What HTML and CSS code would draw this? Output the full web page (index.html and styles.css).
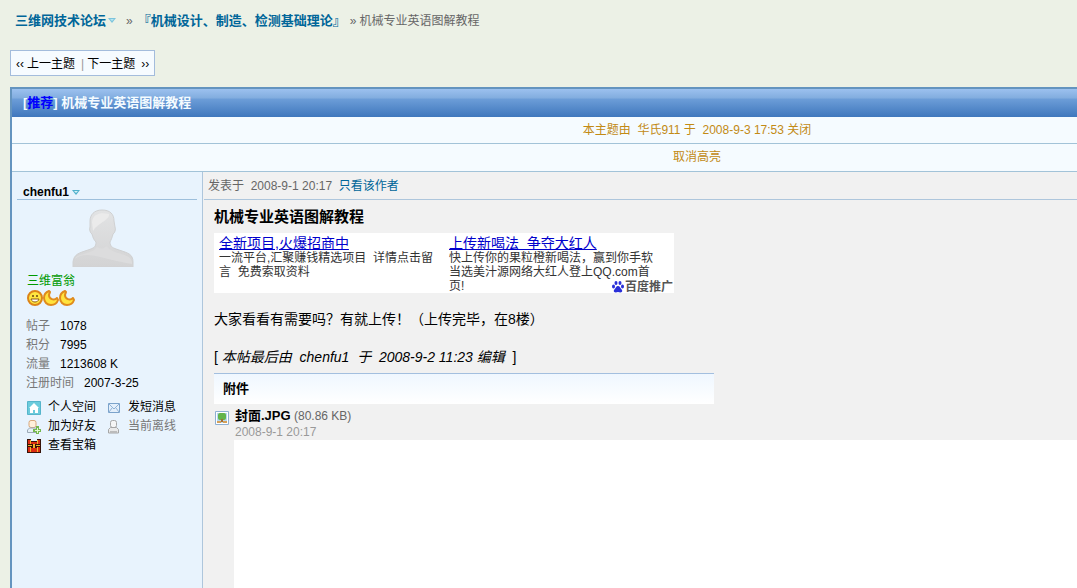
FILE: index.html
```
<!DOCTYPE html>
<html lang="zh-CN">
<head>
    <meta charset="UTF-8">
    <meta name="viewport" content="width=device-width, initial-scale=1.0">
    <title>机械专业英语图解教程 - 三维网技术论坛</title>
    <link rel="stylesheet" href="styles.css">
</head>
<body>
    <nav class="crumbs">
        <a href="#">三维网技术论坛</a>
        <svg class="arrow" width="8" height="5" viewBox="0 0 8 5"><path d="M0 0h8L4 5z" fill="#7cc4dc"/><path d="M2 1h4L4 3z" fill="#b5e6f2"/></svg>
        <span class="sep first">»</span>
        <a class="forum" href="#">『机械设计、制造、检测基础理论』</a>
        <span class="sep">»</span>
        <span>机械专业英语图解教程</span>
    </nav>

    <div class="pager">
        <span>‹‹</span>
        <a href="#">上一主题</a>
        <span class="bar">|</span>
        <a href="#">下一主题</a>
        <span class="next">››</span>
    </div>

    <main class="thread">
        <h1>[<a href="#">推荐</a>] 机械专业英语图解教程</h1>
        <div class="notice">本主题由 &nbsp;华氏911 于 &nbsp;2008-9-3 17:53 关闭</div>
        <div class="notice">取消高亮</div>

        <div class="post">
            <aside class="author">
                <div class="name">
                    <a href="#">chenfu1</a>
                    <svg class="arrow" width="8" height="5" viewBox="0 0 8 5"><path d="M0 0h8L4 5z" fill="#4fb0cb"/><path d="M2 1h4L4 3z" fill="#d5f2f8"/></svg>
                </div>
                <svg class="avatar" width="62" height="58" viewBox="0 0 62 58">
                    <defs>
                        <linearGradient id="skin" x1="0" y1="0" x2="0" y2="1">
                            <stop offset="0" stop-color="#e2e3e4"/>
                            <stop offset="1" stop-color="#d3d3d4"/>
                        </linearGradient>
                    </defs>
                    <path d="M30 1c8 0 12 4 12 11l1 6c1 2 0 6-2 7-1 4-2 6-3 8 0 5 3 6 9 8 9 3 14 4 14 12v5H1v-5c1-8 6-9 15-12 6-2 8-3 8-8-2-2-3-4-4-8-2-1-3-5-2-7V12C18 6 22 1 30 1z" fill="url(#skin)" stroke="#d0d1d2"/>
                    <path d="M20 13c1-8 8-10 17-8 1 5-8 8-14 14l-2 3z" fill="#ebebeb"/>
                    <path d="M3 50c10-9 24-1 57 5v-2c-1-5-6-7-14-9-6-2-10-4-11-7-3 3-7 3-10 1-2 4-8 5-13 7-5 1-8 2-9 5z" fill="#dcdcdd"/>
                </svg>
                <div class="rank">三维富翁</div>
                <div class="stars">
                    <svg width="16" height="16" viewBox="0 0 16 16"><circle cx="8" cy="8" r="7" fill="#ffe640" stroke="#dc8418" stroke-width="2"/><circle cx="6" cy="6" r="1" fill="#6b4510"/><circle cx="10" cy="6" r="1" fill="#6b4510"/><path d="M4 9h8c-1 4-7 4-8 0z" fill="#fff" stroke="#8f5b10"/></svg>
                    <svg width="16" height="16" viewBox="0 0 16 16"><path d="M6 1C3 2 1 5 1 8c0 4 3 7 7 7 3 0 6-2 7-5l-1-2c-3 3-8 1-8-3 0-1 1-2 1-3z" fill="#ffe33d" stroke="#e08b1c" stroke-width="2" stroke-linejoin="round"/></svg>
                    <svg width="16" height="16" viewBox="0 0 16 16"><path d="M6 1C3 2 1 5 1 8c0 4 3 7 7 7 3 0 6-2 7-5l-1-2c-3 3-8 1-8-3 0-1 1-2 1-3z" fill="#ffe33d" stroke="#e08b1c" stroke-width="2" stroke-linejoin="round"/></svg>
                </div>
                <dl class="stats">
                    <div><dt>帖子</dt><dd>1078</dd></div>
                    <div><dt>积分</dt><dd>7995</dd></div>
                    <div><dt>流量</dt><dd>1213608 K</dd></div>
                    <div><dt>注册时间</dt><dd>2007-3-25</dd></div>
                </dl>
                <ul class="actions">
                    <li>
                        <svg width="14" height="14" viewBox="0 0 14 14"><path d="M.5.5h13v13H.5z" fill="#6bcbdc" stroke="#56b5cb"/><path d="M7 2l5 5h-1v5H8V9H6v3H3V7H2z" fill="#fff"/></svg>
                        <a href="#">个人空间</a>
                    </li>
                    <li>
                        <svg width="14" height="14" viewBox="0 0 14 14"><path d="M1.500 2.500h11v9h-11z" fill="#e3effb" stroke="#7ba3cb"/><path d="M2 3l5 5 5-5M2 11l3-4M12 11L9 7" fill="none" stroke="#8fb2d6"/></svg>
                        <a href="#">发短消息</a>
                    </li>
                    <li>
                        <svg width="14" height="14" viewBox="0 0 14 14"><rect x="2" y=".5" width="7" height="7" rx="2" fill="#fff0da" stroke="#d9a77b"/><path d="M.5 12.500V10l2-2h6l2 2v2.500z" fill="#e4eef6" stroke="#9caab7"/><path d="M9 6h3v3h2v3h-2v2H9v-2H6V9h3z" fill="#75b84e"/><path d="M10 8h1v2h2v1h-2v2h-1v-2H8v-1h2z" fill="#e5f8d7"/></svg>
                        <a href="#">加为好友</a>
                    </li>
                    <li class="offline">
                        <svg width="14" height="14" viewBox="0 0 14 14"><rect x="3.500" y=".5" width="6" height="7" rx="2" fill="#f5f5f5" stroke="#a6a6a6"/><path d="M1.500 13V9.500l2-2h6l2 2V13z" fill="#e9e9e9" stroke="#a6a6a6"/><path d="M3 11h7v2H3z" fill="#bbb"/></svg>
                        <span>当前离线</span>
                    </li>
                    <li>
                        <svg width="14" height="14" viewBox="0 0 14 14"><path d="M0 0h4v2h6V0h4v14H0z" fill="#351208"/><path d="M1 1h3v4H1zM10 1h3v4h-3zM4 3h6v2H4zM1 8h3v5H1zM10 8h3v5h-3zM4 9h6v4H4z" fill="#dc2c12"/><path d="M3 1h1v4H3zM10 1h1v4h-1zM1 6h4v1H1zM9 6h4v1H9zM6 5h2v4H6zM3 8h1v5H3zM10 8h1v5h-1z" fill="#f0b42c"/></svg>
                        <a href="#">查看宝箱</a>
                    </li>
                </ul>
            </aside>

            <article class="content">
                <div class="info">发表于 &nbsp;2008-9-1 20:17 &nbsp;<a href="#">只看该作者</a></div>
                <div class="message">
                    <h2>机械专业英语图解教程</h2>
                    <div class="ads">
                        <div class="ad">
                            <a href="#">全新项目,火爆招商中</a>
                            <p>一流平台,汇聚赚钱精选项目 &nbsp;详情点击留言 &nbsp;免费索取资料</p>
                        </div>
                        <div class="ad">
                            <a href="#">上传新喝法 &nbsp;争夺大红人</a>
                            <p>快上传你的果粒橙新喝法，赢到你手软当选美汁源网络大红人登上QQ.com首页!</p>
                        </div>
                        <a class="baidu" href="#">
                            <svg width="12" height="12" viewBox="0 0 12 12" fill="#2a2fd8"><ellipse cx="1.500" cy="5.500" rx="1.500" ry="2"/><ellipse cx="4" cy="2" rx="1.500" ry="2"/><ellipse cx="8" cy="2" rx="1.500" ry="2"/><ellipse cx="10.500" cy="5.500" rx="1.500" ry="2"/><path d="M6 5c2 0 2 2 4 4 1 2-1 3-4 2-3 1-5 0-4-2 2-2 2-4 4-4z"/></svg>
                            <span>百度推广</span>
                        </a>
                    </div>
                    <p class="text">大家看看有需要吗？有就上传！（上传完毕，在8楼）</p>
                    <p class="text edited">[ <i>本帖最后由 &nbsp;chenfu1 &nbsp;于 &nbsp;2008-9-2 11:23 编辑</i> &nbsp;]</p>
                    <h3>附件</h3>
                    <div class="attach">
                        <svg width="14" height="14" viewBox="0 0 14 14"><path d="M.5.5h13v13H.5z" fill="#fff" stroke="#8fb0d2"/><path d="M2 2h10v10H2z" fill="#b6d9f2"/><rect x="3" y="2" width="8" height="7" rx="2" fill="#64b44b"/><path d="M6 8h2v3H6z" fill="#a36c35"/><path d="M2 10h4v2H2zM8 10h4v2H8z" fill="#d5a058"/></svg>
                        <div>
                            <a href="#">封面.JPG</a> <span>(80.86 KB)</span>
                            <div class="date">2008-9-1 20:17</div>
                        </div>
                    </div>
                </div>
                <div class="picture"></div>
            </article>
        </div>
    </main>
</body>
</html>
```
FILE: styles.css
```
* {
    box-sizing: border-box;
}

body {
    display: flex;
    flex-direction: column;
    min-height: 100vh;
    margin: 0;
    padding: 11px 0 0 10px;
    background: #ecf1e6;
    color: #000;
    font: 12px/19px "Liberation Sans", Arial, "Noto Sans CJK SC", sans-serif;
}

a {
    color: inherit;
    text-decoration: none;
}

h1, h2, h3, p, dl, dd, ul {
    margin: 0;
    padding: 0;
}

svg {
    display: block;
    flex: none;
}

/* Top of page */
.crumbs {
    display: flex;
    align-items: center;
    height: 19px;
    padding-left: 5px;
    color: #666;
}

.crumbs a {
    color: #069;
    font-size: 13px;
    font-weight: bold;
}

.crumbs span {
    padding-top: 2px;
}

.crumbs .arrow {
    margin-left: 2px;
}

.crumbs .sep {
    margin: 0 3px 0 4px;
}

.crumbs .first {
    margin-left: 10px;
}

.crumbs .forum {
    margin-left: 2px;
}

.pager {
    display: flex;
    align-self: flex-start;
    height: 26px;
    margin: 20px 0 11px;
    padding: 1px 5px 0;
    border: 1px solid #a3bcdc;
    background: #f6fbff;
    line-height: 24px;
}

.pager a {
    margin-left: 3px;
}

.pager .bar {
    margin-left: 6px;
    color: #999;
}

.pager .next {
    margin-left: 6px;
}

/* Thread */
.thread {
    display: flex;
    flex: 1;
    flex-direction: column;
    border: solid #6494bf;
    border-width: 2px 0 0 2px;
    background: #f1f1f1;
}

.thread h1 {
    padding-left: 11px;
    background: linear-gradient(#9cc1ef, #82addf 32%, #6c9dd8 36%, #3f77bd);
    color: #f4fbff;
    font-size: 13px;
    line-height: 28px;
}

.thread h1 a {
    color: #00f;
}

.notice {
    padding-left: 305px;
    border-bottom: 1px solid #a2c3d8;
    background: #f5fbff;
    color: #c28a14;
    line-height: 26px;
    text-align: center;
}

.notice + .notice {
    line-height: 27px;
}

.post {
    display: flex;
    flex: 1;
}

/* Author column */
.author {
    flex: none;
    width: 191px;
    border-right: 1px solid #aec6dc;
    background: #e8f3fd;
}

.name {
    display: flex;
    align-items: center;
    gap: 3px;
    margin: 0 5px;
    padding: 13px 0 0 6px;
    border-bottom: 1px solid #9dbfdc;
    line-height: 14px;
    font-weight: bold;
}

.avatar {
    margin: 9px 0 6px 60px;
}

.rank {
    padding-left: 15px;
    color: #090;
    line-height: 17px;
}

.stars {
    display: flex;
    padding-left: 15px;
}

.stats {
    padding: 11px 0 0 14px;
    color: #000;
}

.stats div {
    display: flex;
    gap: 10px;
}

.stats dt {
    color: #777;
}

.actions {
    display: grid;
    grid-template-columns: 80px 1fr;
    padding: 5px 0 0 15px;
    list-style: none;
}

.actions li {
    display: flex;
    align-items: center;
    gap: 7px;
}

.actions .offline {
    color: #777;
}

/* Post column */
.content {
    display: flex;
    flex: 1;
    flex-direction: column;
    padding-left: 1px;
}

.info {
    padding: 2px 4px 0;
    border-bottom: 1px solid #aec6dc;
    color: #666;
    line-height: 25px;
}

.info a {
    color: #069;
}

.message {
    padding: 7px 10px 0;
}

.message h2 {
    font-size: 15px;
    line-height: 20px;
}

.ads {
    position: relative;
    display: flex;
    width: 460px;
    max-width: 100%;
    height: 60px;
    margin-top: 6px;
    background: #fff;
    color: #333;
}

.ad {
    width: 50%;
    padding: 2px 10px 0 5px;
    line-height: 14px;
}

.ad a {
    color: #00c;
    font-size: 14px;
    line-height: 16px;
    text-decoration: underline;
}

.baidu {
    position: absolute;
    right: 1px;
    bottom: 0;
    display: flex;
    align-items: center;
    gap: 1px;
    color: #555;
    font-weight: bold;
    line-height: 12px;
}

.text {
    margin-top: 16px;
    font-size: 14px;
    line-height: 20px;
}

.text.edited {
    margin-top: 18px;
}

.message h3 {
    width: 500px;
    max-width: 100%;
    margin-top: 6px;
    padding-left: 9px;
    border-top: 1px solid #a3bfdf;
    background: linear-gradient(#eff7ff, #fff);
    font-size: 13px;
    line-height: 30px;
}

.attach {
    display: flex;
    gap: 6px;
    padding: 4px 0 0 1px;
    line-height: 16px;
}

.attach svg {
    margin-top: 3px;
}

.attach a {
    font-size: 13px;
    font-weight: bold;
}

.attach span {
    color: #666;
}

.attach .date {
    color: #999;
}

.picture {
    flex: 1;
    min-height: 148px;
    margin-left: 30px;
    background: #fff;
}
```
